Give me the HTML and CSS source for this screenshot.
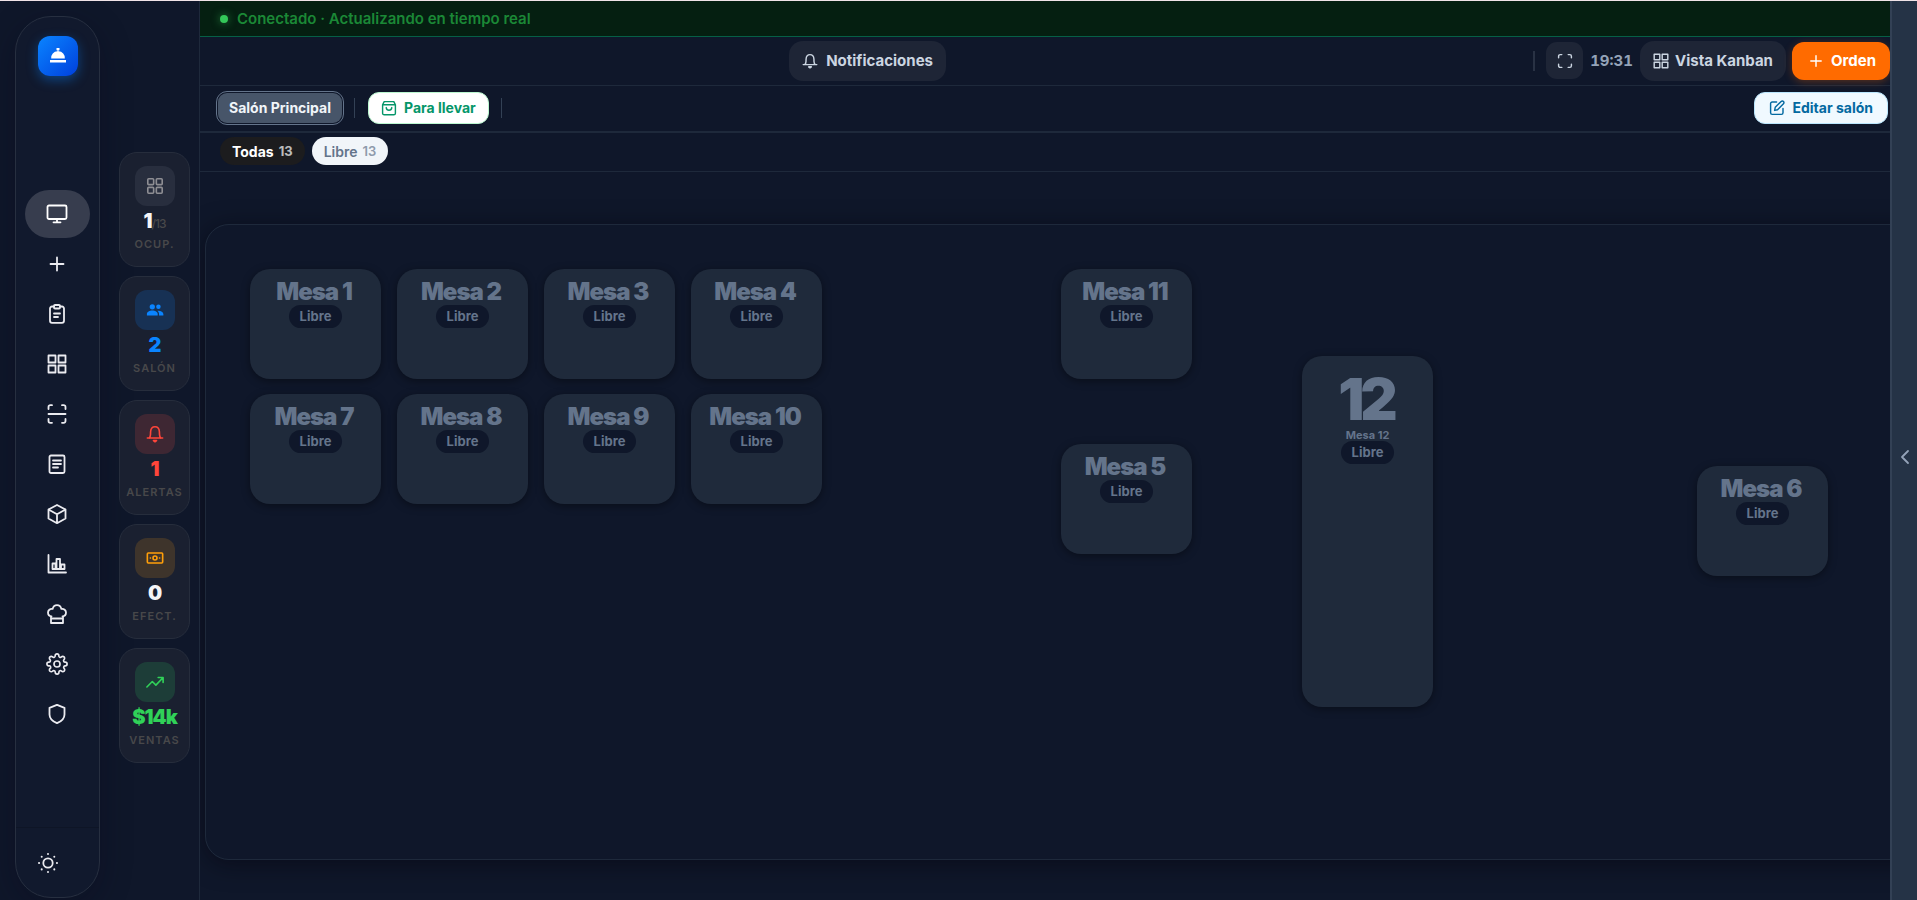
FILE: index.html
```html
<!DOCTYPE html>
<html lang="es">
<head>
    <meta charset="UTF-8">
    <meta name="viewport" content="width=device-width, initial-scale=1.0">
    <title>Salón Principal</title>
    <link rel="stylesheet" href="styles.css">
</head>
<body>
    <!-- Shared icons -->
    <svg class="sprite" aria-hidden="true">
        <symbol id="i-grid" viewBox="0 0 20 20"><path d="M1.5 1.5h7v7h-7zM11.5 1.5h7v7h-7zM1.5 11.5h7v7h-7zM11.5 11.5h7v7h-7z"/></symbol>
        <symbol id="i-plus" viewBox="0 0 20 20"><path d="M10 3.5v13M3.5 10h13"/></symbol>
        <symbol id="i-bell" viewBox="0 0 20 20"><path d="M1.5 14.5h17M3.5 14.5c1.1-1 1.4-2 1.5-4l.1-3C5.300 4.400 7 2 10 2s4.700 2.400 4.900 5.500l.1 3c.1 2 .4 3 1.500 4"/><path d="M8.300 17.300h3.400L10 18.600z"/></symbol>
    </svg>

    <div class="app">
        <aside class="sidebar">
            <a href="#" class="logo" aria-label="Inicio">
                <svg viewBox="0 0 20 20"><path d="M8.500 2h3v2.200h-1v1.100a6.500 6.500 0 0 1 6.300 7.200H3.200a6.500 6.500 0 0 1 6.300-7.200V4.200h-1zM2 14h16v2.400H2z"/></svg>
            </a>
            <nav class="nav">
                <a href="#" class="nav-item active" aria-label="Salón"><svg class="wide" viewBox="0 0 22 20"><rect x="1.500" y="1.500" width="19" height="13.500" rx="1.500"/><path d="M11 15v3M7.500 18.300h7"/></svg></a>
                <a href="#" class="nav-item" aria-label="Nueva orden"><svg><use href="#i-plus"/></svg></a>
                <a href="#" class="nav-item" aria-label="Órdenes"><svg viewBox="0 0 20 20"><path d="M7 2.500H5a2 2 0 0 0-2 2v12.300a2 2 0 0 0 2 2h10a2 2 0 0 0 2-2V4.500a2 2 0 0 0-2-2h-2"/><rect x="7" y="1" width="6" height="3.500" rx="1"/><path d="M7 9.500h6M7 13h4"/></svg></a>
                <a href="#" class="nav-item" aria-label="Mesas"><svg><use href="#i-grid"/></svg></a>
                <a href="#" class="nav-item" aria-label="Escanear"><svg viewBox="0 0 20 20"><path d="M1.500 5V3a1.800 1.800 0 0 1 1.800-1.800H5M15 1.200h1.700A1.800 1.800 0 0 1 18.500 3v2M18.500 15v2a1.800 1.800 0 0 1-1.800 1.800H15M5 18.800H3.300A1.800 1.800 0 0 1 1.500 17v-2M1.500 10h17"/></svg></a>
                <a href="#" class="nav-item" aria-label="Menú"><svg viewBox="0 0 20 20"><rect x="2.500" y="1.500" width="15" height="17.500" rx="1.500"/><path d="M6 6.500h8M6 10h8M6 13.500h5"/></svg></a>
                <a href="#" class="nav-item" aria-label="Inventario"><svg viewBox="0 0 20 20"><path d="M10 1l8.500 4.500v9L10 19.200l-8.500-4.700v-9zM1.500 5.500l8.500 4.700 8.500-4.700M10 10.200v9"/></svg></a>
                <a href="#" class="nav-item" aria-label="Reportes"><svg viewBox="0 0 20 20"><path d="M1.500 1v17.500H19"/><path d="M5.500 9.500h3v5.500h-3zM9.500 5h3.500v10H9.500zM14 10.500h3.500V15H14z"/></svg></a>
                <a href="#" class="nav-item" aria-label="Cocina"><svg viewBox="0 0 20 20"><path d="M4 12.500V19h12v-6.500M4 14.500h12M4.500 12.500C2.500 12.300 1 10.700 1 8.600c0-2.300 2-4.100 4.600-3.700C6.200 2.700 7.900 1.200 10 1.200s3.800 1.500 4.400 3.700C17 4.500 19 6.300 19 8.600c0 2.100-1.500 3.700-3.500 3.900"/></svg></a>
                <a href="#" class="nav-item" aria-label="Ajustes"><svg class="wide" viewBox="0 0 24 24"><path d="M19.400 15a1.650 1.650 0 0 0 .33 1.820l.06.06a2 2 0 1 1-2.830 2.830l-.06-.06a1.650 1.650 0 0 0-2.800 1.170V21a2 2 0 0 1-4 0v-.09a1.650 1.650 0 0 0-2.900-1.080l-.06.06a2 2 0 1 1-2.830-2.830l.06-.06A1.650 1.650 0 0 0 3.090 14H3a2 2 0 0 1 0-4h.09a1.650 1.650 0 0 0 1.280-2.800l-.06-.06a2 2 0 1 1 2.830-2.830l.06.06A1.650 1.650 0 0 0 10 3.090V3a2 2 0 0 1 4 0v.09a1.650 1.650 0 0 0 2.800 1.280l.06-.06a2 2 0 1 1 2.830 2.830l-.06.06A1.650 1.650 0 0 0 20.910 10H21a2 2 0 0 1 0 4h-.09a1.650 1.650 0 0 0-1.510 1z"/><circle cx="12" cy="12" r="3.300"/></svg></a>
                <a href="#" class="nav-item" aria-label="Seguridad"><svg viewBox="0 0 20 20"><path d="M10 .8l7.500 3v6.700c0 4-2.800 6.800-7.500 8.700-4.700-1.900-7.500-4.700-7.500-8.700V3.800z"/></svg></a>
            </nav>
            <div class="sidebar-footer">
                <button type="button" class="theme-btn" aria-label="Cambiar tema">
                    <svg viewBox="0 0 20 20"><circle cx="10" cy="10" r="4.700"/><path class="rays" d="M10 1v.1M10 18.900v.1M1 10h.1M18.900 10h.1M3.700 3.700v.1M16.300 3.700v.1M3.700 16.300v.1M16.300 16.300v.1"/></svg>
                </button>
            </div>
        </aside>

        <section class="kpis">
            <div class="kpi">
                <div class="kpi-icon"><svg viewBox="0 0 20 20"><rect x="2" y="2" width="6.500" height="6.500" rx="1"/><rect x="11.500" y="2" width="6.500" height="6.500" rx="1"/><rect x="2" y="11.500" width="6.500" height="6.500" rx="1"/><rect x="11.500" y="11.500" width="6.500" height="6.500" rx="1"/></svg></div>
                <div class="kpi-value">1<small>/13</small></div>
                <div class="kpi-label">Ocup.</div>
            </div>
            <div class="kpi blue">
                <div class="kpi-icon"><svg class="filled" viewBox="0 0 20 20"><circle cx="7" cy="6.500" r="2.900"/><circle cx="13.800" cy="6.500" r="2.500"/><path d="M1 16v-1.500c0-2.600 3-4 6-4s6 1.400 6 4V16zM14.500 16v-1.500c0-1.600-.7-2.800-1.800-3.700 3.200-.4 6.600 1 6.600 3.700V16z"/></svg></div>
                <div class="kpi-value">2</div>
                <div class="kpi-label">Salón</div>
            </div>
            <div class="kpi red">
                <div class="kpi-icon"><svg><use href="#i-bell"/></svg></div>
                <div class="kpi-value">1</div>
                <div class="kpi-label">Alertas</div>
            </div>
            <div class="kpi amber">
                <div class="kpi-icon"><svg viewBox="0 0 20 20"><rect x="1.500" y="4.500" width="17" height="11" rx="1"/><circle cx="10" cy="10" r="2.200"/><path d="M4.800 10h.2M15 10h.2"/></svg></div>
                <div class="kpi-value">0</div>
                <div class="kpi-label">Efect.</div>
            </div>
            <div class="kpi green">
                <div class="kpi-icon"><svg viewBox="0 0 20 20"><path d="M1 15.500l6-6 4 4 7.500-8M13.500 5H19v5.500"/></svg></div>
                <div class="kpi-value">$14k</div>
                <div class="kpi-label">Ventas</div>
            </div>
        </section>

        <main class="main">
            <div class="status"><span class="dot"></span>Conectado · Actualizando en tiempo real</div>

            <header class="topbar">
                <div class="topbar-center">
                    <button type="button" class="btn"><svg><use href="#i-bell"/></svg>Notificaciones</button>
                </div>
                <div class="topbar-right">
                    <span class="divider thick"></span>
                    <button type="button" class="btn btn-square" aria-label="Pantalla completa"><svg viewBox="0 0 20 20"><path d="M2 6V4a2 2 0 0 1 2-2h2M14 2h2a2 2 0 0 1 2 2v2M18 14v2a2 2 0 0 1-2 2h-2M6 18H4a2 2 0 0 1-2-2v-2"/></svg></button>
                    <time class="clock">19:31</time>
                    <button type="button" class="btn btn-kanban"><svg><use href="#i-grid"/></svg>Vista Kanban</button>
                    <button type="button" class="btn btn-orange"><svg><use href="#i-plus"/></svg>Orden</button>
                </div>
            </header>

            <div class="tabs">
                <button type="button" class="tab tab-active">Salón Principal</button>
                <span class="divider"></span>
                <button type="button" class="tab tab-takeaway"><svg viewBox="0 0 20 20"><path d="M2 6l2-4h12l2 4v10.500a2 2 0 0 1-2 2H4a2 2 0 0 1-2-2zM2 6h16M6.500 9.500c.3 2.200 1.700 3.200 3.500 3.200s3.200-1 3.500-3.200"/></svg>Para llevar</button>
                <span class="divider"></span>
                <button type="button" class="tab tab-edit"><svg viewBox="0 0 20 20"><path d="M9.500 2.500H4a2 2 0 0 0-2 2V16a2 2 0 0 0 2 2h11.500a2 2 0 0 0 2-2v-5.500"/><path d="M7 13l.8-3.800 7.400-7.400a1.900 1.900 0 0 1 2.900 2.900l-7.400 7.400z"/></svg>Editar salón</button>
            </div>

            <div class="filters">
                <button type="button" class="chip chip-active">Todas <span>13</span></button>
                <button type="button" class="chip">Libre <span>13</span></button>
            </div>

            <div class="stage">
                <div class="floor">
                    <button type="button" class="mesa m1"><strong>Mesa 1</strong><span class="state">Libre</span></button>
                    <button type="button" class="mesa m2"><strong>Mesa 2</strong><span class="state">Libre</span></button>
                    <button type="button" class="mesa m3"><strong>Mesa 3</strong><span class="state">Libre</span></button>
                    <button type="button" class="mesa m4"><strong>Mesa 4</strong><span class="state">Libre</span></button>
                    <button type="button" class="mesa m7"><strong>Mesa 7</strong><span class="state">Libre</span></button>
                    <button type="button" class="mesa m8"><strong>Mesa 8</strong><span class="state">Libre</span></button>
                    <button type="button" class="mesa m9"><strong>Mesa 9</strong><span class="state">Libre</span></button>
                    <button type="button" class="mesa m10"><strong>Mesa 10</strong><span class="state">Libre</span></button>
                    <button type="button" class="mesa m11"><strong>Mesa 11</strong><span class="state">Libre</span></button>
                    <button type="button" class="mesa m5"><strong>Mesa 5</strong><span class="state">Libre</span></button>
                    <button type="button" class="mesa mesa-tall m12"><strong>12</strong><small>Mesa 12</small><span class="state">Libre</span></button>
                    <button type="button" class="mesa m6"><strong>Mesa 6</strong><span class="state">Libre</span></button>
                </div>
            </div>
        </main>

        <button type="button" class="drawer" aria-label="Abrir panel">
            <svg viewBox="0 0 20 20"><path d="M13 4l-6 6 6 6"/></svg>
        </button>
    </div>
</body>
</html>
```
FILE: styles.css
```css
* {
    margin: 0;
    padding: 0;
    box-sizing: border-box;
}

:root {
    --bg: #0f172a;
    --line: #1e293b;
    --card: #1f2a3b;
    --muted: #64748b;
    --soft: #cbd5e1;
}

body {
    background: var(--bg);
    color: #f1f5f9;
    font-family: 'Inter', sans-serif;
    overflow: hidden;
}

button {
    font: inherit;
    color: inherit;
    border: none;
    cursor: pointer;
}

a {
    color: inherit;
    text-decoration: none;
}

svg {
    display: block;
    flex-shrink: 0;
    fill: none;
    stroke: currentColor;
    stroke-width: 1.8;
    stroke-linecap: round;
    stroke-linejoin: round;
}

.sprite {
    position: absolute;
    width: 0;
    height: 0;
}

.app {
    display: flex;
    height: 100vh;
    border-top: 1px solid #f1e4e8;
}

/* Sidebar */
.sidebar {
    display: flex;
    flex-direction: column;
    align-items: center;
    width: 85px;
    margin: 15px 0 2px 15px;
    padding-top: 19px;
    flex-shrink: 0;
    background: #11192d;
    border: 1px solid #272f40;
    border-radius: 36px;
    box-shadow: 0 8px 32px rgba(10, 5, 25, 0.3);
}

.logo {
    display: flex;
    align-items: center;
    justify-content: center;
    width: 40px;
    height: 40px;
    border-radius: 12px;
    background: linear-gradient(135deg, #0a84ff, #0040dd);
    box-shadow: 0 4px 12px rgba(10, 132, 255, 0.4);
}

.logo svg {
    width: 20px;
    height: 20px;
    fill: #fff;
    stroke: none;
}

.nav {
    flex: 1;
    display: flex;
    flex-direction: column;
    justify-content: center;
    gap: 2px;
    padding-top: 24px;
}

.nav-item {
    display: flex;
    align-items: center;
    justify-content: center;
    width: 65px;
    height: 48px;
    padding-right: 1px;
    border-radius: 24px;
    color: #ebebf0;
}

.nav-item.active {
    background: #373d4e;
    color: #fff;
}

.nav-item svg {
    width: 20px;
    height: 20px;
}

.nav-item svg.wide {
    width: 22px;
    height: 22px;
}

.sidebar-footer {
    width: 100%;
    height: 70px;
    padding: 25px 22px;
    border-top: 1px solid #0e1526;
}

.theme-btn {
    background: none;
    color: #ebebf0;
}

.theme-btn svg {
    width: 20px;
    height: 20px;
}

.rays {
    stroke-width: 2;
}

/* KPI column */
.kpis {
    display: flex;
    flex-direction: column;
    justify-content: center;
    gap: 9px;
    width: 100px;
    padding: 13px 9px 0 19px;
    flex-shrink: 0;
    border-right: 1px solid var(--line);
}

.kpi {
    display: flex;
    flex-direction: column;
    align-items: center;
    height: 115px;
    padding-top: 13px;
    background: #1a2030;
    border: 1px solid #262d3c;
    border-radius: 18px;
}

.kpi-icon {
    display: flex;
    align-items: center;
    justify-content: center;
    width: 40px;
    height: 40px;
    border-radius: 12px;
    background: #282e3e;
    color: #8e8e93;
}

.kpi-icon svg {
    width: 18px;
    height: 18px;
}

.kpi-icon .filled {
    fill: currentColor;
    stroke: none;
}

.kpi-value {
    margin-top: 3px;
    font-size: 20px;
    line-height: 24px;
    font-weight: 900;
    letter-spacing: -1px;
    color: #f5f5f7;
}

.kpi-value small {
    font-size: 12px;
    line-height: 12px;
    font-weight: 500;
    color: #48484a;
}

.kpi-label {
    margin-top: 4px;
    font-size: 11px;
    line-height: 14px;
    font-weight: 600;
    letter-spacing: 1px;
    text-transform: uppercase;
    color: #48484a;
}

.blue .kpi-icon {
    background: #173154;
    color: #0a84ff;
}

.blue .kpi-value {
    color: #0a84ff;
}

.red .kpi-icon {
    background: #3e2733;
    color: #ff453a;
}

.red .kpi-value {
    color: #ff453a;
}

.amber .kpi-icon {
    background: #3e342b;
    color: #ff9f0a;
}

.green .kpi-icon {
    background: #1d3d38;
    color: #30d158;
}

.green .kpi-value {
    color: #30d158;
}

/* Main area */
.main {
    flex: 1;
    min-width: 0;
    display: flex;
    flex-direction: column;
}

.status {
    display: flex;
    align-items: center;
    gap: 9px;
    height: 36px;
    padding: 0 20px;
    background: #051f11;
    border-bottom: 1px solid #065f46;
    font-size: 15px;
    font-weight: 600;
    color: #1b8836;
}

.dot {
    width: 8px;
    height: 8px;
    border-radius: 50%;
    background: #34c759;
    box-shadow: 0 0 8px rgba(52, 199, 89, 0.6);
}

.topbar {
    display: flex;
    align-items: center;
    height: 49px;
    padding-bottom: 1px;
    border-bottom: 1px solid var(--line);
}

.topbar-center {
    flex: 1;
    display: flex;
    justify-content: center;
    padding-left: 2px;
}

.topbar-right {
    display: flex;
    align-items: center;
}

.btn {
    display: flex;
    align-items: center;
    gap: 8px;
    height: 40px;
    padding: 0 13px;
    border-radius: 14px;
    font-size: 15px;
    font-weight: 700;
    color: var(--soft);
    background: #1e2536;
}

.btn svg {
    width: 16px;
    height: 16px;
}

.btn-square {
    justify-content: center;
    width: 37px;
    height: 37px;
    padding: 0;
    margin-left: 11px;
    border-radius: 11px;
}

.clock {
    margin: 0 7px;
    font-size: 15px;
    font-weight: 700;
    font-variant-numeric: tabular-nums;
    color: #94a3b8;
}

.btn-kanban {
    gap: 6px;
}

.btn-orange {
    gap: 7px;
    height: 38px;
    margin-left: 6px;
    padding: 0 14px 0 16px;
    border-radius: 12px;
    background: #ff6b00;
    color: #fff;
    box-shadow: 0 2px 8px rgba(255, 107, 0, 0.3);
}

.divider {
    width: 1px;
    height: 20px;
    background: #334155;
}

.divider.thick {
    width: 2px;
    background: #293244;
}

.tabs {
    display: flex;
    align-items: center;
    height: 47px;
    padding: 0 2px 2px 18px;
    border-bottom: 2px solid var(--line);
}

.tab {
    display: flex;
    align-items: center;
    gap: 7px;
    height: 32px;
    padding: 0 12px;
    border: 1px solid transparent;
    border-radius: 11px;
    font-size: 14px;
    font-weight: 700;
}

.tab svg {
    width: 16px;
    height: 16px;
}

.tab-active {
    height: 30px;
    padding: 0 10px;
    margin-right: 12px;
    background: #475569;
    border-radius: 9px;
    outline: 1px solid #64748b;
    outline-offset: 1px;
}

.tab-takeaway {
    margin: 0 12px 0 13px;
    background: #fff;
    border-color: #bbf7d0;
    color: #059669;
}

.tab-edit {
    margin-left: auto;
    padding: 0 14px;
    background: #f0f9ff;
    border-color: #bae6fd;
    color: #0369a1;
}

.filters {
    display: flex;
    align-items: center;
    gap: 7px;
    height: 39px;
    padding: 0 20px 2px;
    border-bottom: 1px solid var(--line);
}

.chip {
    display: flex;
    align-items: center;
    gap: 5px;
    height: 28px;
    padding: 0 12px;
    border-radius: 14px;
    background: #f1f5f9;
    font-size: 14px;
    font-weight: 600;
    color: #64748b;
}

.chip span {
    font-size: 13px;
    opacity: 0.7;
}

.chip-active {
    background: #1c1c1e;
    color: #fff;
    font-weight: 700;
}

/* Floor plan, wider than the visible area */
.stage {
    flex: 1;
    padding: 52px 0 40px 5px;
    overflow: hidden;
}

.floor {
    position: relative;
    height: 100%;
    width: calc(100% + 40px);
    border: 1px solid var(--line);
    border-radius: 24px;
    box-shadow: 0 4px 24px rgba(5, 2, 12, 0.5);
}

.mesa {
    position: absolute;
    display: flex;
    flex-direction: column;
    align-items: center;
    width: 131px;
    height: 110px;
    padding-top: 9px;
    background: var(--card);
    border-radius: 20px;
    box-shadow: 0 2px 8px rgba(0, 0, 0, 0.4);
    color: var(--muted);
}

.mesa strong {
    padding-right: 3px;
    font-size: 24px;
    line-height: 27px;
    font-weight: 900;
    letter-spacing: -1px;
}

.mesa small {
    font-size: 11px;
    line-height: 12px;
    font-weight: 700;
}

.state {
    padding: 0 11px;
    border-radius: 12px;
    background: var(--bg);
    font-size: 13px;
    line-height: 23px;
    font-weight: 700;
}

.mesa-tall {
    height: 351px;
    padding-top: 14px;
}

.mesa-tall strong {
    font-size: 58px;
    line-height: 59px;
    letter-spacing: -4px;
}

.m1 { left: 44px; top: 44px; }
.m2 { left: 191px; top: 44px; }
.m3 { left: 338px; top: 44px; }
.m4 { left: 485px; top: 44px; }
.m7 { left: 44px; top: 169px; }
.m8 { left: 191px; top: 169px; }
.m9 { left: 338px; top: 169px; }
.m10 { left: 485px; top: 169px; }
.m11 { left: 855px; top: 44px; }
.m5 { left: 855px; top: 219px; }
.m12 { left: 1096px; top: 131px; }
.m6 { left: 1491px; top: 241px; }

/* Collapsed right panel */
.drawer {
    display: flex;
    align-items: center;
    justify-content: center;
    width: 27px;
    flex-shrink: 0;
    background: #253346;
    border-left: 2px solid #334155;
    color: #94a3b8;
    padding-top: 12px;
}

.drawer svg {
    width: 20px;
    height: 20px;
}
```
